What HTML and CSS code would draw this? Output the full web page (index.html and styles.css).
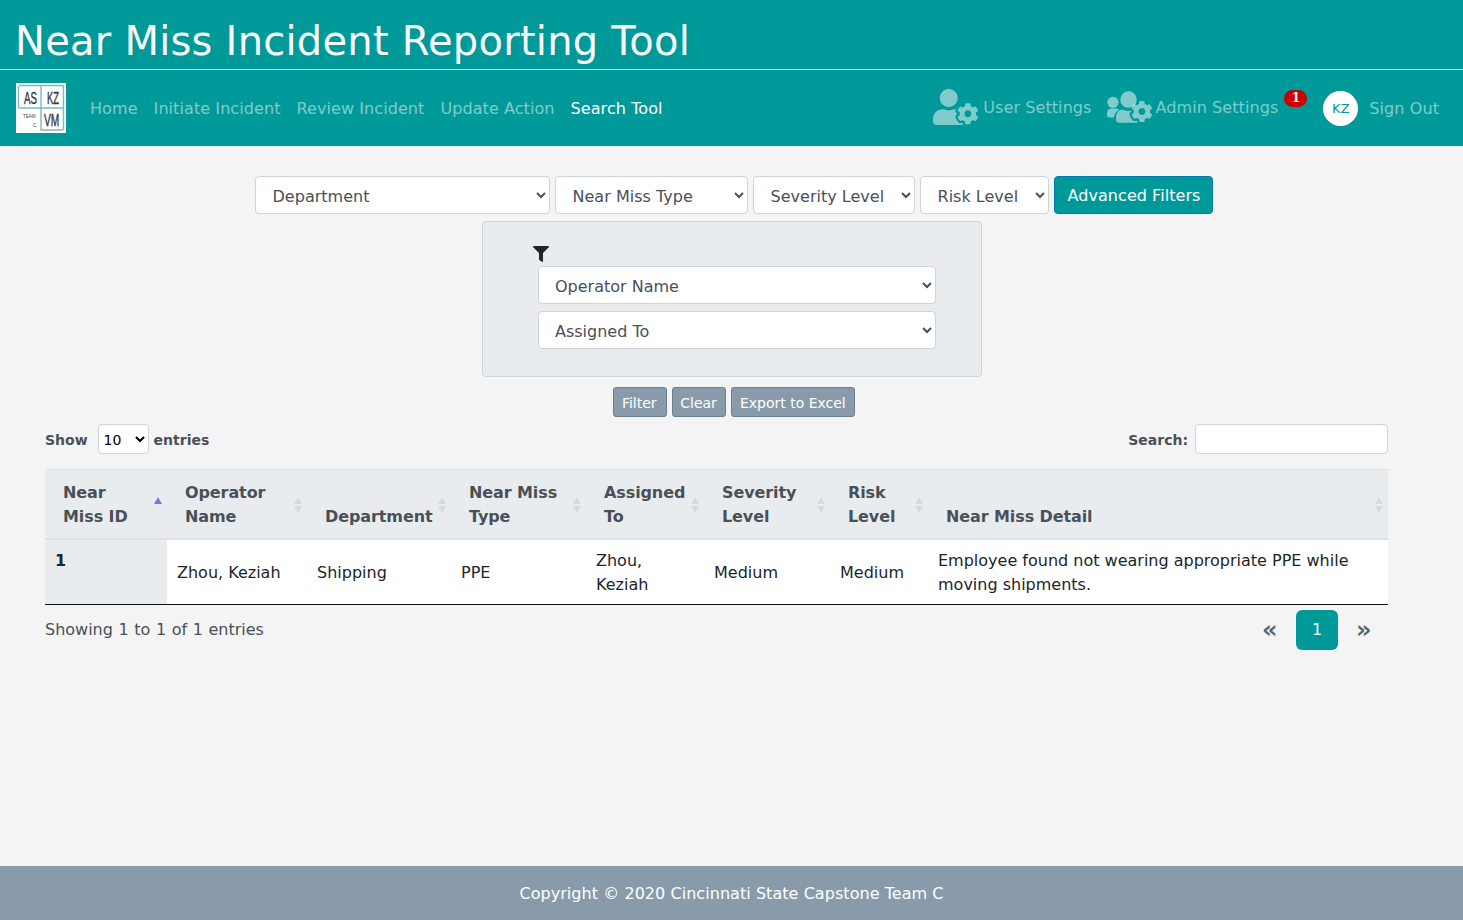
FILE: index.html
```html
<!DOCTYPE html>
<html lang="en">
<head>
<meta charset="UTF-8">
<meta name="viewport" content="width=device-width, initial-scale=1.0">
<title>Near Miss Incident Reporting Tool</title>
<link rel="stylesheet" href="styles.css">
</head>
<body>
    <svg class="svg-defs" width="0" height="0">
        <defs>
            <path id="gear" d="M610.5 373.3c2.6-14.1 2.6-28.5 0-42.6l25.8-14.9c3-1.7 4.3-5.2 3.3-8.5-6.7-21.6-18.2-41.2-33.2-57.4-2.3-2.5-6-3.1-9-1.4l-25.8 14.9c-10.9-9.3-23.4-16.5-36.9-21.3v-29.8c0-3.4-2.4-6.4-5.7-7.1-22.3-5-45-4.8-66.2 0-3.3.7-5.7 3.7-5.7 7.1v29.8c-13.5 4.8-26 12-36.9 21.3l-25.8-14.9c-2.9-1.7-6.7-1.1-9 1.4-15 16.2-26.5 35.8-33.2 57.4-1 3.3.4 6.8 3.3 8.5l25.8 14.9c-2.6 14.1-2.6 28.5 0 42.6l-25.8 14.9c-3 1.7-4.3 5.2-3.3 8.5 6.7 21.6 18.2 41.1 33.2 57.4 2.3 2.5 6 3.1 9 1.4l25.8-14.9c10.9 9.3 23.4 16.5 36.9 21.3v29.8c0 3.4 2.4 6.4 5.7 7.1 22.3 5 45 4.8 66.2 0 3.3-.7 5.7-3.7 5.7-7.1v-29.8c13.5-4.8 26-12 36.9-21.3l25.8 14.9c2.9 1.7 6.7 1.1 9-1.4 15-16.2 26.5-35.8 33.2-57.4 1-3.3-.4-6.8-3.3-8.5l-25.8-14.9zM496 400.5c-26.8 0-48.5-21.8-48.5-48.5s21.8-48.5 48.5-48.5 48.5 21.8 48.5 48.5-21.7 48.5-48.5 48.5z"/>
        </defs>
    </svg>

    <header class="site-title">
        <h1>Near Miss Incident Reporting Tool</h1>
    </header>

    <nav class="navbar">
        <svg class="logo" viewBox="0 0 50 50" width="50" height="50">
            <rect width="50" height="50" fill="#fff"/>
            <path d="M3 2.500H46Q47.500 2.500 47.500 4V46Q47.500 47 46 47H25V2.500M2.500 3V24Q2.500 25 4 25H47.500" fill="none" stroke="#7db8ba" stroke-width="1.400"/>
            <g class="logo-text">
                <text transform="translate(8 21) scale(.59 1)">AS</text>
                <text transform="translate(31 21) scale(.57 1)">KZ</text>
                <text transform="translate(28 43) scale(.62 1)">VM</text>
            </g>
            <g class="logo-small">
                <text transform="translate(7 34.500) scale(.75 1)">TEAM</text>
                <text transform="translate(17 44) scale(.75 1)">C</text>
            </g>
        </svg>
        <ul class="nav-links">
            <li><a href="#">Home</a></li>
            <li><a href="#">Initiate Incident</a></li>
            <li><a href="#">Review Incident</a></li>
            <li><a href="#">Update Action</a></li>
            <li><a href="#" class="active">Search Tool</a></li>
        </ul>
        <div class="nav-right">
            <a href="#" class="nav-icon-link user-link">
                <svg class="nav-icon" viewBox="0 0 640 512" width="45" height="36">
                    <use href="#gear"/>
                    <path d="M224 256c70.7 0 128-57.3 128-128S294.7 0 224 0 96 57.3 96 128s57.3 128 128 128zm201.2 226.5c-2.3-1.2-4.6-2.6-6.8-3.9l-7.9 4.6c-6 3.4-12.8 5.3-19.6 5.3-10.9 0-21.4-4.6-28.9-12.6-18.3-19.8-32.3-43.9-40.2-69.6-5.5-17.7 1.9-36.4 17.9-45.7l7.9-4.6c-.1-2.6-.1-5.2 0-7.8l-7.9-4.6c-16-9.2-23.4-28-17.9-45.7.9-2.9 2.2-5.8 3.2-8.7-3.8-.3-7.5-1.2-11.4-1.2h-16.7c-22.2 10.2-46.9 16-72.9 16s-50.6-5.8-72.9-16h-16.7C60.2 288 0 348.2 0 422.4V464c0 26.5 21.5 48 48 48h352c10.1 0 19.5-3.2 27.2-8.5-1.2-3.8-2-7.7-2-11.8v-9.2z"/>
                </svg>
                User Settings
            </a>
            <a href="#" class="nav-icon-link admin-link">
                <svg class="nav-icon" viewBox="0 0 640 512" width="45" height="36">
                    <use href="#gear" y="-32"/>
                    <circle cx="85" cy="190" r="80"/>
                    <circle cx="306" cy="150" r="118"/>
                    <path d="M0 340c0-35 29-64 64-64h64c17.600 0 33.500 7.100 45.100 18.600-40.300 22.100-68.900 62-75.100 109.400H32c-17.700 0-32-14.300-32-32z"/>
                    <path d="M425.200 450.500c-2.300-1.200-4.600-2.600-6.800-3.900l-7.900 4.600c-6 3.400-12.800 5.300-19.600 5.300-10.900 0-21.400-4.600-28.900-12.600-18.300-19.800-32.300-43.900-40.200-69.600-5.500-17.700 1.900-36.400 17.900-45.700l7.900-4.600c-.1-2.600-.1-5.200 0-7.800l-7.900-4.600c-3-1.800-5.800-3.900-8.200-6.200-11.800 3.900-24.200 6.600-37.500 6.600-24.600 0-47.600-6-68.500-16h-8.300C179.600 288 128 339.600 128 403.200V432c0 26.500 21.500 48 48 48h262c-7.800-6.500-12.800-16-12.800-26.300v-3.200z"/>
                </svg>
                Admin Settings
                <span class="badge">1</span>
            </a>
            <span class="avatar">KZ</span>
            <a href="#" class="sign-out">Sign Out</a>
        </div>
    </nav>

    <main class="content">
        <form class="filters">
            <div class="filter-row">
                <select class="field row-field w-department"><option>Department</option></select>
                <select class="field row-field w-type"><option>Near Miss Type</option></select>
                <select class="field row-field w-severity"><option>Severity Level</option></select>
                <select class="field row-field w-risk"><option>Risk Level</option></select>
                <button type="button" class="btn-advanced">Advanced Filters</button>
            </div>
            <div class="advanced-panel">
                <svg class="filter-icon" viewBox="0 0 512 512" width="16" height="16">
                    <path d="M487.976 0H24.028C2.710 0-8.047 25.866 7.058 40.971L192 225.941V432c0 7.831 3.821 15.170 10.237 19.662l80 55.980C298.020 518.690 320 507.493 320 487.980V225.941l184.947-184.970C520.021 25.896 509.338 0 487.976 0z"/>
                </svg>
                <select class="field panel-field"><option>Operator Name</option></select>
                <select class="field panel-field"><option>Assigned To</option></select>
            </div>
            <div class="action-row">
                <button type="button" class="btn-small">Filter</button>
                <button type="button" class="btn-small">Clear</button>
                <button type="button" class="btn-small">Export to Excel</button>
            </div>
        </form>

        <div class="table-tools">
            <label class="tool-label">Show
                <select class="length-select"><option>10</option></select>
                entries</label>
            <label class="tool-label">Search:
                <input type="search" class="search-input">
            </label>
        </div>

        <table class="results">
            <colgroup>
                <col class="c-id"><col class="c-operator"><col class="c-dept"><col class="c-type">
                <col class="c-assigned"><col class="c-severity"><col class="c-risk"><col>
            </colgroup>
            <thead>
                <tr>
                    <th class="sort-asc">Near Miss ID</th>
                    <th>Operator Name</th>
                    <th>Department</th>
                    <th>Near Miss Type</th>
                    <th>Assigned To</th>
                    <th>Severity Level</th>
                    <th>Risk Level</th>
                    <th>Near Miss Detail</th>
                </tr>
            </thead>
            <tbody>
                <tr>
                    <td class="id-cell">1</td>
                    <td>Zhou, Keziah</td>
                    <td>Shipping</td>
                    <td>PPE</td>
                    <td>Zhou, Keziah</td>
                    <td>Medium</td>
                    <td>Medium</td>
                    <td>Employee found not wearing appropriate PPE while moving shipments.</td>
                </tr>
            </tbody>
        </table>

        <div class="table-foot">
            <span class="table-info">Showing 1 to 1 of 1 entries</span>
            <div class="pager">
                <a href="#" class="page-arrow">«</a>
                <a href="#" class="page-num">1</a>
                <a href="#" class="page-arrow">»</a>
            </div>
        </div>
    </main>

    <footer class="site-footer">Copyright © 2020 Cincinnati State Capstone Team C</footer>
</body>
</html>
```

FILE: styles.css
```css
* {
    box-sizing: border-box;
}
body {
    margin: 0;
    min-height: 100vh;
    display: flex;
    flex-direction: column;
    font-family: "DejaVu Sans", sans-serif;
    font-size: 16px;
    color: #212529;
    background-color: #f4f4f4;
}
.svg-defs {
    position: absolute;
}
.site-title {
    height: 70px;
    padding: 17px 15px 0;
    background-color: #009999;
    border-bottom: 1px solid #e8f5f5;
}
.site-title h1 {
    margin: 0;
    font-size: 40px;
    font-weight: 400;
    line-height: 48px;
    letter-spacing: 0.24px;
    color: #f8f9fa;
}
.navbar {
    height: 76px;
    display: flex;
    align-items: center;
    padding: 0 16px;
    background-color: #009999;
}
.logo {
    flex: none;
}
.logo-text text {
    font-family: "Liberation Sans", sans-serif;
    font-size: 16.500px;
    fill: #3a3a3a;
    stroke: #3a3a3a;
    stroke-width: 0.400;
}
.logo-small text {
    font-family: "Liberation Sans", sans-serif;
    font-size: 6px;
    fill: #444;
}
.nav-links {
    display: flex;
    gap: 16px;
    list-style: none;
    margin: 0 0 0 24px;
    padding: 0;
    letter-spacing: 0.08px;
}
.nav-links a, .nav-icon-link, .sign-out {
    color: rgba(255, 255, 255, 0.5);
    text-decoration: none;
}
.nav-links a.active {
    color: #fff;
}
.nav-right {
    margin-left: auto;
    display: flex;
    align-items: center;
    letter-spacing: 0.08px;
}
.nav-icon-link {
    display: flex;
    align-items: center;
    gap: 5px;
    margin-top: -2px;
}
.user-link {
    margin-right: 15px;
}
.nav-icon {
    fill: rgba(255, 255, 255, 0.5);
    flex: none;
}
.admin-link {
    position: relative;
    gap: 4px;
    margin-right: 45px;
}
.badge {
    position: absolute;
    right: -29px;
    top: 1px;
    width: 23px;
    height: 17px;
    border-radius: 9px;
    background-color: #cc0000;
    color: #fff;
    font-family: "DejaVu Serif", serif;
    font-size: 12px;
    font-weight: 700;
    line-height: 17px;
    text-align: center;
}
.avatar {
    width: 35px;
    height: 35px;
    border-radius: 50%;
    background-color: #fff;
    color: #009999;
    font-size: 13px;
    line-height: 35px;
    text-align: center;
}
.sign-out {
    margin: 0 8px 0 11px;
}
.content {
    padding: 30px 75px 0 45px;
}
.filter-row {
    display: flex;
    justify-content: center;
    gap: 5px;
    padding-left: 34px;
}
.field {
    height: 38px;
    padding: 2px 13px 0 12px;
    font: inherit;
    color: #495057;
    background-color: #fff;
    border: 1px solid #ced4da;
    border-radius: 4px;
}
.row-field {
    padding-left: 13px;
    letter-spacing: 0.02px;
}
.w-department { width: 295px; }
.w-type { width: 193px; }
.w-severity { width: 162px; }
.w-risk { width: 129px; }
.btn-advanced {
    height: 38px;
    width: 159px;
    padding: 0 0 0 2px;
    font: inherit;
    letter-spacing: 0.05px;
    color: #fff;
    background-color: #009999;
    border: 1px solid #0078b4;
    border-radius: 4px;
}
.advanced-panel {
    width: 500px;
    height: 156px;
    margin: 7px 0 0 437px;
    padding: 24px 45px 0 55px;
    display: flex;
    flex-direction: column;
    align-items: stretch;
    background-color: #e9ecef;
    border: 1px solid #ced4da;
    border-radius: 4px;
}
.filter-icon {
    fill: #212529;
    margin: 0 0 4px -5px;
    flex: none;
}
.panel-field {
    flex: none;
    margin-bottom: 7px;
}
.action-row {
    display: flex;
    justify-content: center;
    gap: 5px;
    margin-top: 10px;
    padding-left: 35px;
}
.btn-small {
    height: 30px;
    min-width: 54px;
    padding: 2px 8.500px 0 7.500px;
    font: inherit;
    font-size: 14px;
    color: #fff;
    background-color: #899bab;
    border: 1px solid #6c7f8c;
    border-radius: 3px;
}
.table-tools {
    display: flex;
    justify-content: space-between;
    align-items: center;
    margin: 7px 0 15px;
    width: 1343px;
}
.tool-label {
    display: flex;
    align-items: center;
    height: 30px;
    padding-top: 2px;
    font-size: 14px;
    font-weight: 700;
    color: #495057;
}
.length-select {
    width: 51px;
    height: 30px;
    margin: -2px 5px 0 10px;
    padding: 1px 1px 0;
    font-family: inherit;
    font-size: 14px;
    background-color: #fff;
    border: 1px solid #ced4da;
    border-radius: 4px;
}
.search-input {
    width: 193px;
    height: 30px;
    margin: -2px 0 0 7px;
    background-color: #fff;
    border: 1px solid #ced4da;
    border-radius: 4px;
}
.results {
    width: 1343px;
    table-layout: fixed;
    border-collapse: collapse;
    background-color: #fff;
    border-bottom: 1px solid #111;
}
.c-id { width: 122px; }
.c-operator { width: 140px; }
.c-dept { width: 144px; }
.c-type { width: 135px; }
.c-assigned { width: 118px; }
.c-severity { width: 126px; }
.c-risk { width: 98px; }
.results th {
    position: relative;
    padding: 11px 18px 9px;
    vertical-align: bottom;
    text-align: left;
    font-size: 16px;
    line-height: 24px;
    letter-spacing: -0.1px;
    color: #495057;
    background-color: #e9ecef;
    border-top: 1px solid #dee2e6;
    border-bottom: 2px solid #dee2e6;
}
.results th::before, .results th::after {
    content: "";
    position: absolute;
    right: 5px;
    border-left: 4.500px solid transparent;
    border-right: 4.500px solid transparent;
}
.results th::before {
    top: 27px;
    border-bottom: 7px solid #d6dade;
}
.results th::after {
    top: 36px;
    border-top: 7px solid #d6dade;
}
.results th.sort-asc::before {
    border-bottom-color: #7b7bd6;
}
.results th.sort-asc::after {
    display: none;
}
.results td {
    padding: 9px 10px 7px;
    line-height: 24px;
    color: #212529;
}
.results td.id-cell {
    padding-bottom: 20px;
    font-weight: 700;
    background-color: #e9ecef;
    vertical-align: top;
}
.table-foot {
    width: 1343px;
    display: flex;
    justify-content: space-between;
    align-items: center;
    padding-top: 5px;
    color: #495057;
}
.table-info {
    word-spacing: 0.5px;
    margin-top: -2px;
}
.pager {
    display: flex;
    align-items: center;
    gap: 19px;
    padding-right: 18px;
}
.page-arrow {
    width: 14px;
    font-size: 24px;
    font-weight: 700;
    line-height: 40px;
    text-align: center;
    color: #5c6670;
    text-decoration: none;
}
.page-num {
    width: 42px;
    height: 40px;
    margin: 0 -1px 0 1px;
    line-height: 40px;
    text-align: center;
    color: #fff;
    background-color: #009999;
    border-radius: 6px;
    text-decoration: none;
}
.site-footer {
    margin-top: auto;
    height: 54px;
    line-height: 56px;
    text-align: center;
    letter-spacing: 0.05px;
    color: #fff;
    background-color: #899bab;
}
```
